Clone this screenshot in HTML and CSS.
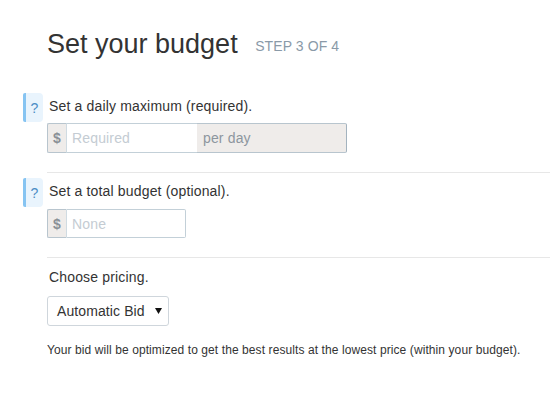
FILE: index.html
```html
<!DOCTYPE html>
<html>
<head>
<meta charset="utf-8">
<link rel="stylesheet" href="styles.css">
</head>
<body>
<div class="page">
  <h1 class="title">Set your budget <span class="step">STEP 3 OF 4</span></h1>

  <div class="section first">
    <div class="label-row">
      <span class="help">?</span>
      <span class="label">Set a daily maximum (required).</span>
    </div>
    <div class="group">
      <span class="addon dollar">$</span>
      <input class="field daily" type="text" placeholder="Required">
      <span class="addon unit">per day</span>
    </div>
  </div>

  <div class="section">
    <div class="label-row">
      <span class="help">?</span>
      <span class="label">Set a total budget (optional).</span>
    </div>
    <div class="group">
      <span class="addon dollar">$</span>
      <input class="field total" type="text" placeholder="None">
    </div>
  </div>

  <div class="section last">
    <div class="label-row">
      <span class="label">Choose pricing.</span>
    </div>
    <div class="select">
      <span>Automatic Bid</span>
      <svg class="caret" width="7" height="6" viewBox="0 0 7 6"><polygon points="0,0 7,0 3.5,6" fill="#111"/></svg>
    </div>
    <p class="note">Your bid will be optimized to get the best results at the lowest price (within your budget).</p>
  </div>
</div>
</body>
</html>
```

FILE: styles.css
```css
html, body {
  margin: 0;
  padding: 0;
  background: #fff;
}
body {
  font-family: "Liberation Sans", Arial, sans-serif;
  color: #333;
}
.page {
  padding-left: 47px;
  padding-top: 29px;
}
.title {
  margin: 0;
  font-size: 27px;
  font-weight: normal;
  line-height: 30px;
  color: #333;
}
.step {
  font-size: 14px;
  color: #8a9aa8;
  margin-left: 10px;
  vertical-align: 2px;
  letter-spacing: 0.1px;
}
.section {
  border-top: 1px solid #e7e7e7;
  padding-top: 8px;
  padding-bottom: 19px;
}
.section.first {
  border-top: none;
  margin-top: 35px;
  padding-top: 0;
}
.section.last {
  padding-top: 9px;
}
.label-row {
  position: relative;
  height: 20px;
  line-height: 20px;
  font-size: 14px;
  margin-left: 2px;
  letter-spacing: 0.16px;
}
.help {
  position: absolute;
  left: -26px;
  top: -3px;
  width: 17px;
  height: 29px;
  border-left: 3px solid #86c4f2;
  background: #e9f4fd;
  border-radius: 2px 4px 4px 2px;
  color: #4b8dc5;
  font-size: 14px;
  line-height: 31px;
  text-align: center;
  letter-spacing: 0;
}
.group {
  display: flex;
  margin-top: 7px;
  height: 30px;
}
.section:not(.first) .group {
  margin-top: 8px;
  height: 29px;
}
.addon {
  box-sizing: border-box;
  background: #efecea;
  border: 1px solid #b8c5ce;
  height: 100%;
  display: flex;
  align-items: center;
  font-size: 14px;
  color: #8d969e;
  letter-spacing: 0.15px;
}
.dollar {
  width: 19px;
  justify-content: center;
  font-weight: bold;
  color: #8a9097;
  border-right: none;
  border-radius: 2px 0 0 2px;
}
.unit {
  width: 150px;
  padding-left: 6px;
  border-left: none;
  border-right-color: #a3b3bf;
  border-radius: 0 2px 2px 0;
}
.field {
  box-sizing: border-box;
  height: 100%;
  margin: 0;
  border: 1px solid #c3d0d8;
  border-left: 1px solid #d0dbe2;
  padding: 0 0 0 5px;
  font-family: "Liberation Sans", Arial, sans-serif;
  font-size: 14px;
  letter-spacing: 0.15px;
  color: #333;
  background: #fff;
  outline: none;
}
.field::placeholder {
  color: #c4ccd3;
}
.daily {
  width: 131px;
  border-right: none;
}
.total {
  width: 120px;
  border-radius: 0 2px 2px 0;
}
.select {
  box-sizing: border-box;
  margin-top: 9px;
  width: 122px;
  height: 30px;
  border: 1px solid #cfd6dc;
  border-radius: 3px;
  display: flex;
  align-items: center;
  justify-content: space-between;
  padding: 0 6px 0 9px;
  font-size: 14px;
  letter-spacing: 0.1px;
  color: #333;
}
.caret {
  display: block;
}
.note {
  margin: 16px 0 0;
  font-size: 12px;
  line-height: 16px;
  letter-spacing: 0.09px;
  color: #333;
}
```
